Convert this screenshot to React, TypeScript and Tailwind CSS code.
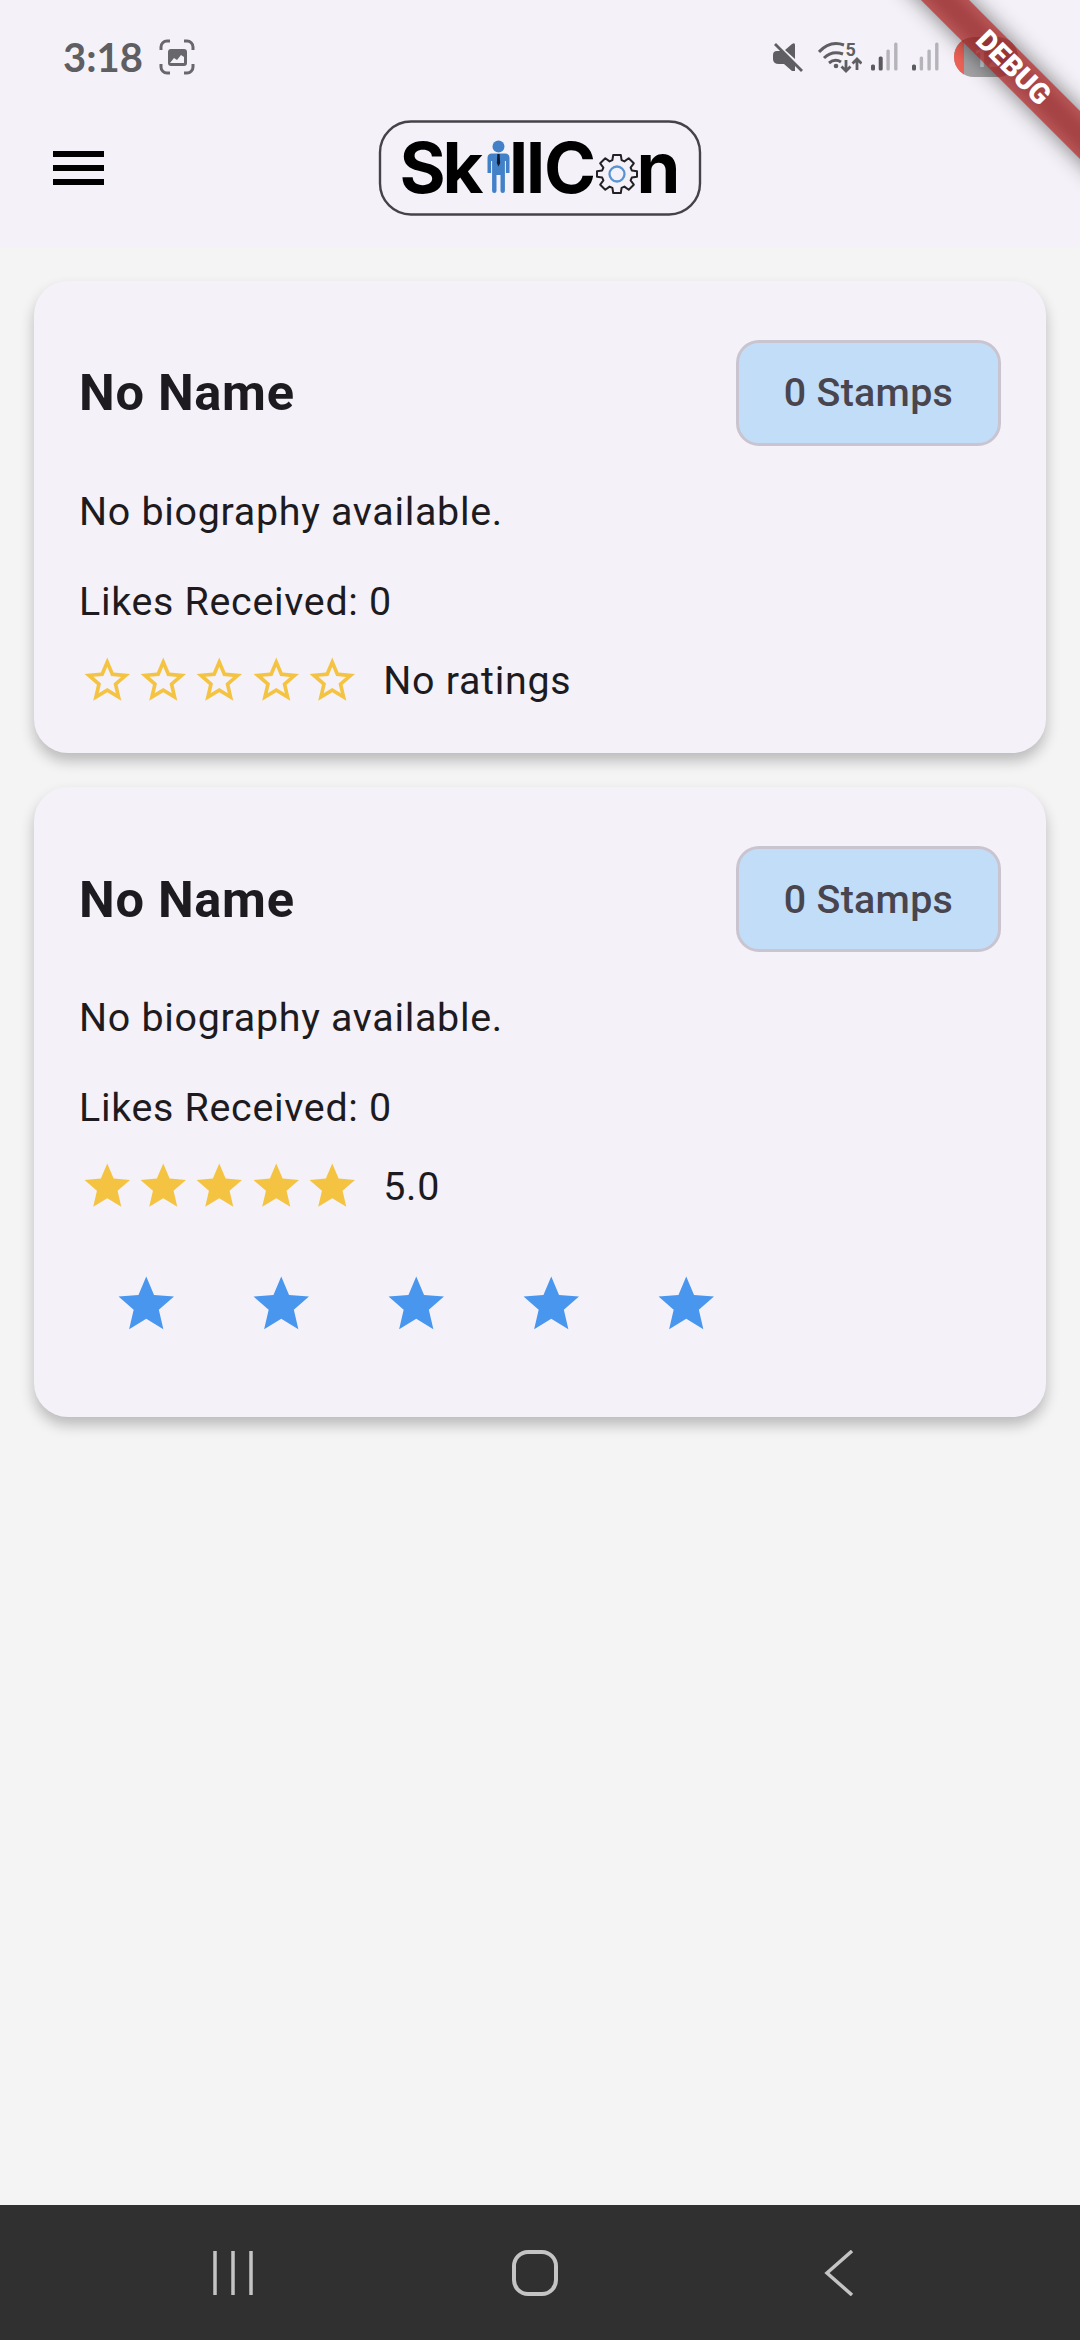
import { useState } from 'react';

interface Profile {
  id: number;
  name: string;
  bio: string;
  likes: number;
  stamps: number;
  rating: number | null;
}

const profiles: Profile[] = [
  { id: 1, name: 'No Name', bio: 'No biography available.', likes: 0, stamps: 0, rating: null },
  { id: 2, name: 'No Name', bio: 'No biography available.', likes: 0, stamps: 0, rating: 5 },
];

const STARS = [1, 2, 3, 4, 5];

const STAR_PATH = 'M12 17.27 18.18 21l-1.64-7.03L22 9.24l-7.19-.61L12 2 9.19 8.63 2 9.24l5.46 4.73L5.82 21z';
const STAR_HOLE = 'M12 15.4l-3.76 2.27 1-4.28-3.32-2.88 4.38-.38L12 6.1l1.71 4.04 4.38.38-3.32 2.88 1 4.28L12 15.4z';

function Star({ filled, className }: { filled: boolean; className: string }) {
  return (
    <svg viewBox="0 0 24 24" className={className} fill="currentColor" fillRule="evenodd">
      <path d={filled ? STAR_PATH : `${STAR_PATH}${STAR_HOLE}`} />
    </svg>
  );
}

function Signal({ level }: { level: number }) {
  const bars = [6, 14, 21, 28];
  return (
    <svg viewBox="0 0 28 30" className="h-[30px] w-7">
      {bars.map((h, i) => (
        <rect
          key={h}
          x={i * 7.7}
          y={29.5 - h}
          width={i < level ? 4 : 3.4}
          height={h}
          rx="1.5"
          fill={i < level ? '#5b5a5e' : '#b5b4b8'}
        />
      ))}
    </svg>
  );
}

function StatusBar() {
  return (
    <div className="flex h-[112px] items-start pl-[63px] pt-9">
      <span className="w-24 font-['Lato'] text-[40px] font-bold leading-[42px] text-[#5f5e62]">3:18</span>
      {/* Screenshot indicator */}
      <svg viewBox="0 0 36 36" className="mt-[3px] h-9 w-9" fill="none" stroke="#68676b" strokeWidth="3">
        <path d="M2 11V8a6 6 0 0 1 6-6h3M25 2h3a6 6 0 0 1 6 6v3M34 25v3a6 6 0 0 1-6 6h-3M11 34H8a6 6 0 0 1-6-6v-3" />
        <path
          fill="#68676b"
          stroke="none"
          fillRule="evenodd"
          d="M12 10h13a3 3 0 0 1 3 3v11a3 3 0 0 1-3 3H12a3 3 0 0 1-3-3V13a3 3 0 0 1 3-3zm-1 14h14v-6l-3-2-4 5-3-2z"
        />
      </svg>
      <div className="ml-[577px] mt-[5px] flex">
        {/* Muted */}
        <svg viewBox="0 0 32 32" className="h-8 w-8" fill="#5f5e62">
          <path d="M1 14q0-4 4-4h5l13 13v7h-3l-8-7H7q-6 0-6-5zM13 9l7-6q3-2 3 1v14z" />
          <path d="M3 3l27 27" stroke="#5f5e62" strokeWidth="2.8" />
        </svg>
        {/* Wi-Fi */}
        <svg viewBox="0 -6 44 38" className="-mt-1.5 ml-3.5 h-[38px] w-11" fill="none" stroke="#5f5e62" strokeWidth="3">
          <path d="M1 11Q12-1 26 4M6 17q8-8 19-4M11 22q6-5 12-1" />
          <circle cx="18" cy="25" r="2.3" fill="#5f5e62" stroke="none" />
          <path d="M28 19v11M23.5 25.5l4.500 4.500 4.500-4.500M39 29V18M34.500 22.500l4.500-4.500 4.500 4.500" strokeWidth="2.8" />
          <text x="27.5" y="15" fill="#5f5e62" stroke="none" fontFamily="Roboto" fontSize="18" fontWeight="700">
            5
          </text>
        </svg>
        <div className="ml-[9px]">
          <Signal level={2} />
        </div>
        <div className="ml-[13px]">
          <Signal level={1} />
        </div>
      </div>
      <div className="ml-3.5 mt-px flex h-10 w-16 overflow-hidden rounded-full bg-[#a3a2a5]">
        <div className="w-[10px] bg-[#ef6257]" />
        <span className="flex-1 pl-2.5 pt-0.5 font-['Roboto'] text-[25px] font-bold leading-10 text-[#d8d7da]">12</span>
      </div>
    </div>
  );
}

function Logo() {
  return (
    <svg viewBox="0 0 324 96" className="h-24 w-[324px]">
      <rect x="2" y="1.5" width="320" height="93" rx="31" fill="none" stroke="#454349" strokeWidth="2.4" />
      <text x="21.5 64.5 131 148 166 258.5" y="73" fontFamily="Inter" fontWeight="700" fontSize="70.5" fill="#000">
        SkllCn
      </text>
      {/* Person standing in for the "i" */}
      <g fill="#4280c8">
        <circle cx="120.5" cy="26.5" r="6" />
        <path d="M114 33.5h13q4.500 0 4.500 4.500v15h-3.600V41h-1v30q0 2-2.200 2t-2.200-2V55h-4v16q0 2-2.200 2t-2.200-2V41h-1v12h-3.600V38q0-4.500 4.500-4.500z" />
        <path d="M119.400 34h2.200l.6 9-1.700 3.500-1.700-3.500z" fill="#101a2c" />
      </g>
      {/* Gear standing in for the "o" */}
      <g fill="none" strokeLinejoin="round">
        <path
          transform="translate(239 54)"
          stroke="#222126"
          strokeWidth="2"
          d="M-3.800-19h7.600l.8 5.200 2.800 1.200 4.300-3.200 5.100 5.100-3.200 4.300 1.200 2.800 5.200.8v5.600l-5.200.8-1.200 2.800 3.200 4.300-5.100 5.100-4.300-3.200-2.800 1.200-.8 5.200h-7.600l-.8-5.200-2.800-1.200-4.300 3.200-5.100-5.100 3.200-4.300-1.200-2.800-5.200-.8v-5.600l5.200-.8 1.200-2.800-3.200-4.300 5.100-5.100 4.300 3.200 2.800-1.200z"
        />
        <circle cx="239" cy="54" r="7.5" stroke="#5a93d3" strokeWidth="2.3" />
      </g>
    </svg>
  );
}

function DebugBanner() {
  return (
    <div className="pointer-events-none absolute right-0 top-0 h-[260px] w-[260px] overflow-hidden">
      <div className="absolute left-[13px] top-[51px] h-[34px] w-[360px] rotate-45">
        <div className="absolute inset-0 bg-black/50 blur-[11px]" />
        <div className="absolute inset-0 flex items-center justify-center bg-[#b71c1c]/63 font-['Roboto'] text-[28.7px] font-black text-white">
          DEBUG
        </div>
      </div>
    </div>
  );
}

function ProfileCard({ profile }: { profile: Profile }) {
  const [ownRating, setOwnRating] = useState(5);
  const rated = profile.rating !== null;

  return (
    <div className="rounded-[34px] bg-[#f4f1f9] p-[45px] text-[39.4px] leading-[56.25px] tracking-[0.7px] text-[#1d1b20] shadow-[0_8px_14px_rgba(0,0,0,0.24)]">
      <div className="flex h-[134px] items-center justify-between">
        <h2 className="pt-0.5 text-[50.6px] font-bold">{profile.name}</h2>
        <button className="h-[106px] w-[265px] rounded-[23px] border-[3px] border-[#cac4d0] bg-[#c2ddf7] pt-0.5 font-medium tracking-[0.28px] text-[#49454f]">
          {profile.stamps} Stamps
        </button>
      </div>
      <p className="mt-[24.5px]">{profile.bio}</p>
      <p className="mt-[33.75px]">Likes Received: {profile.likes}</p>
      <div className="mt-[21.5px] flex h-[56.25px] items-center">
        {STARS.map((n) => (
          <Star key={n} filled={rated} className="mx-[0.875px] size-[54.5px] text-[#f4c342]" />
        ))}
        <span className="ml-[23px] pt-0.5">{rated ? profile.rating?.toFixed(1) : 'No ratings'}</span>
      </div>
      {rated && (
        <div className="mt-[22.5px] flex">
          {STARS.map((n) => (
            <button key={n} onClick={() => setOwnRating(n)} className="flex size-[135px] items-center justify-center">
              <Star filled={n <= ownRating} className="size-[66.5px] text-[#4896ee]" />
            </button>
          ))}
        </div>
      )}
    </div>
  );
}

export default function App() {
  return (
    <div className="relative flex h-[2340px] w-[1080px] flex-col overflow-hidden bg-[#f4f4f4] font-['Roboto',sans-serif]">
      <header className="h-[248px] bg-[#f4f2f8]">
        <StatusBar />
        <div className="grid h-[111px] grid-cols-[1fr_auto_1fr] items-center">
          <button className="ml-[53px] flex w-[51px] flex-col gap-2">
            <span className="h-1.5 bg-black" />
            <span className="h-1.5 bg-black" />
            <span className="h-1.5 bg-black" />
          </button>
          <Logo />
        </div>
      </header>

      <main className="flex flex-1 flex-col gap-[33.75px] px-[34px] pt-[32.5px]">
        {profiles.map((profile) => (
          <ProfileCard key={profile.id} profile={profile} />
        ))}
      </main>

      {/* Android navigation */}
      <nav className="flex h-[135px] items-center bg-[#303030] pl-[213px]">
        <svg viewBox="0 0 40 46" className="h-[46px] w-10" stroke="#c4c4c4" strokeWidth="3.5">
          <path d="M2 1v44M20 1v44M38 1v44" />
        </svg>
        <svg viewBox="0 0 46 46" className="ml-[259px] h-[46px] w-[46px]" fill="none" stroke="#c4c4c4" strokeWidth="4">
          <rect x="2" y="2" width="42" height="42" rx="14" />
        </svg>
        <svg viewBox="0 0 30 46" className="ml-[266px] h-[46px] w-[30px]" fill="none" stroke="#c4c4c4" strokeWidth="3.5">
          <path d="M28 1 3 23l25 22" />
        </svg>
      </nav>
      <DebugBanner />
    </div>
  );
}
